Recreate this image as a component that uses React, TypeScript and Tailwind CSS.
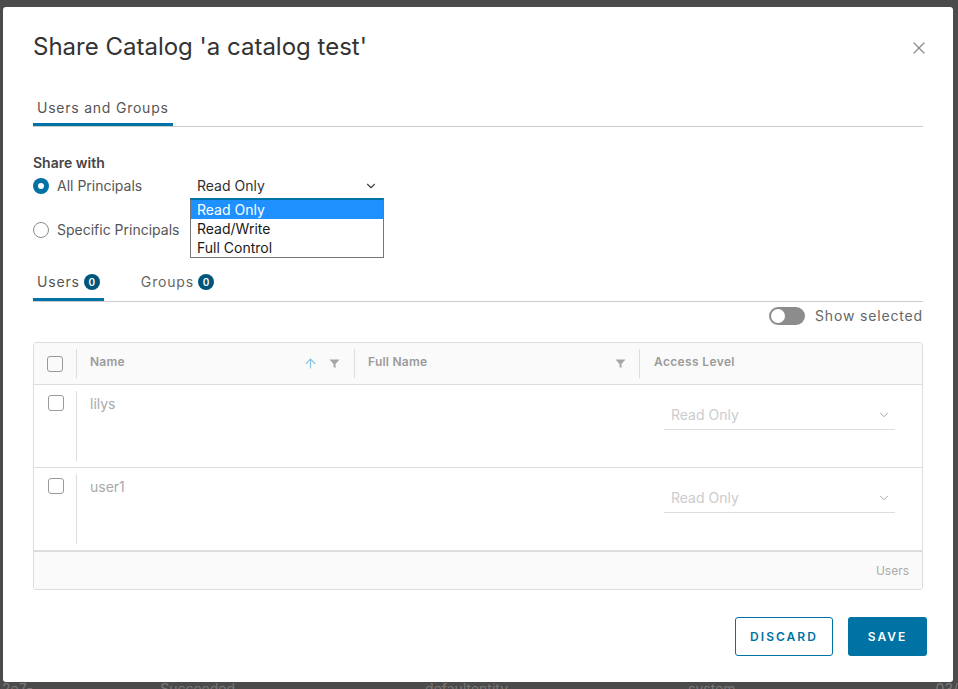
import { ChevronDown, X, ArrowUp } from 'lucide-react';

const font = { fontFamily: 'Inter, "Open Sans", sans-serif' };

function Radio({ checked, label }: { checked?: boolean; label: string }) {
  return (
    <div className="flex items-center gap-2">
      {checked ? (
        <span className="flex h-4 w-4 items-center justify-center rounded-full bg-[#0072a3]">
          <span className="h-[6px] w-[6px] rounded-full bg-white" />
        </span>
      ) : (
        <span className="h-4 w-4 rounded-full border border-[#8c8c8c] bg-white" />
      )}
      <span className="text-sm text-[#565656]">{label}</span>
    </div>
  );
}

function Checkbox() {
  return <span className="block h-4 w-4 rounded-[3px] border border-[#999]" />;
}

function Filter() {
  return (
    <svg width="11" height="11" viewBox="0 0 11 11">
      <path d="M0.5 1.5h10L6.5 6v4L4.5 9V6z" fill="#a6a6a6" />
    </svg>
  );
}

function Badge({ n }: { n: number }) {
  return (
    <span className="ml-1 flex h-4 w-4 items-center justify-center rounded-full bg-[#00567a] text-[10px] font-semibold tracking-normal text-white">
      {n}
    </span>
  );
}

function Row({ name }: { name: string }) {
  return (
    <div className="flex h-[83px] border-b border-[#dddddd]">
      <div className="flex w-[42px] shrink-0 justify-center pt-[10px] pl-[2px]">
        <Checkbox />
      </div>
      <div className="my-[6px] w-px bg-[#dddddd]" />
      <div className="flex-1 pl-[13px] pt-[9px] text-sm text-[#aaaaaa]">{name}</div>
      <div className="w-[258px] pr-[27px] pt-[20px]">
        <div className="flex h-[25px] items-start justify-between border-b border-[#dddddd] pl-[7px] pr-[4px]">
          <span className="text-sm text-[#cccccc]">Read Only</span>
          <ChevronDown className="mt-[3px] h-[14px] w-[14px] text-[#999]" strokeWidth={1.5} />
        </div>
      </div>
    </div>
  );
}

export default function App() {
  return (
    <div className="flex h-[689px] w-[958px] flex-col overflow-hidden bg-[#4b4b4b]" style={font}>
      <div className="ml-[3px] mt-[7px] flex h-[675px] w-[950px] shrink-0 flex-col rounded-[3px] bg-white px-[30px]">
        {/* Header */}
        <div className="flex items-start justify-between pt-[24px]">
          <h1 className="text-[24px] leading-[32px] font-normal text-[#333333]">Share Catalog 'a catalog test'</h1>
          <X className="mr-[-6px] mt-[7px] h-[20px] w-[20px] text-[#8c8c8c]" strokeWidth={1.5} />
        </div>

        {/* Top tabs */}
        <div className="mt-[35px] flex border-b border-[#cccccc]">
          <div className="border-b-[3px] border-[#0072a3] px-1 pb-[5px] text-sm tracking-[0.055em] text-[#565656]">
            Users and Groups
          </div>
        </div>

        {/* Share with */}
        <div className="mt-[26px] text-sm font-semibold text-[#454545]">Share with</div>
        <div className="relative mt-[3px] flex items-center">
          <div className="w-[157px]">
            <Radio checked label="All Principals" />
          </div>
          <div className="flex w-[194px] items-center justify-between pl-[7px] pr-[6px]">
            <span className="text-sm text-[#313131]">Read Only</span>
            <ChevronDown className="h-[14px] w-[14px] text-[#454545]" strokeWidth={2} />
          </div>
          {/* open native list */}
          <div className="absolute left-[157px] top-[22px] z-10 w-[194px] border border-[#767676] border-t-2 border-t-[#0072a3] bg-white text-sm leading-[19px] text-[#1a1a1a]">
            <div className="bg-[#1e90ff] pl-[6px] text-white">Read Only</div>
            <div className="pl-[6px]">Read/Write</div>
            <div className="pl-[6px]">Full Control</div>
          </div>
        </div>
        <div className="mt-[24px]">
          <Radio label="Specific Principals" />
        </div>

        {/* Users / Groups tabs */}
        <div className="mt-[32px] flex items-end border-b border-[#cccccc]">
          <div className="flex items-center border-b-[3px] border-[#0072a3] px-1 pb-[6px] text-sm tracking-[0.06em] text-[#565656]">
            Users <Badge n={0} />
          </div>
          <div className="ml-[33px] flex items-center border-b-[3px] border-transparent px-1 pb-[6px] text-sm tracking-[0.06em] text-[#666]">
            Groups <Badge n={0} />
          </div>
        </div>

        <div className="mt-[4px] flex items-center justify-end gap-[10px]">
          <span className="flex h-[18px] w-[36px] items-center rounded-full bg-[#8c8c8c] pl-[2px]">
            <span className="h-[14px] w-[14px] rounded-full bg-white" />
          </span>
          <span className="text-sm tracking-[0.06em] text-[#666]">Show selected</span>
        </div>

        {/* Table */}
        <div className="mt-[16px] overflow-hidden rounded-[3px] border border-[#dddddd]">
          <div className="flex h-[42px] border-b border-[#dddddd] bg-[#fafafa] text-xs font-semibold text-[#9a9a9a]">
            <div className="flex w-[42px] shrink-0 items-center justify-center">
              <Checkbox />
            </div>
            <div className="my-[6px] w-px bg-[#dddddd]" />
            <div className="flex w-[277px] items-start justify-between pl-[13px] pr-[14px] pt-[11px]">
              <span className="tracking-[0.02em]">Name</span>
              <span className="flex items-center gap-[11px] pt-[2px]">
                <ArrowUp className="h-[15px] w-[15px] text-[#89c3dd]" strokeWidth={1.8} />
                <Filter />
              </span>
            </div>
            <div className="my-[6px] w-px bg-[#dddddd]" />
            <div className="flex w-[284px] items-start justify-between pl-[13px] pr-[13px] pt-[11px]">
              <span className="tracking-[0.02em]">Full Name</span>
              <span className="pt-[4px]">
                <Filter />
              </span>
            </div>
            <div className="my-[6px] w-px bg-[#dddddd]" />
            <div className="pl-[14px] pt-[11px] tracking-[0.03em]">Access Level</div>
          </div>
          <Row name="lilys" />
          <Row name="user1" />
          <div className="flex h-[38px] items-center justify-end border-t border-[#dddddd] bg-[#fafafa] pr-[13px] text-xs text-[#aaaaaa]">
            Users
          </div>
        </div>

        {/* Footer buttons */}
        <div className="mt-[27px] flex justify-end gap-[15px]">
          <button className="h-[39px] w-[98px] rounded-[3px] border border-[#0072a3] text-xs font-semibold tracking-[0.17em] text-[#0072a3]">
            DISCARD
          </button>
          <button className="mr-[-4px] h-[39px] w-[79px] rounded-[3px] bg-[#0072a3] text-xs font-semibold tracking-[0.17em] text-white">
            SAVE
          </button>
        </div>
      </div>
      <div className="flex gap-[100px] pl-[2px] text-sm leading-[14px] text-[#777]">
        <span>2e7-563829-190</span>
        <span>Succeeded</span>
        <span className="ml-[90px]">defaultentity</span>
        <span className="ml-[80px]">system</span>
        <span className="ml-[100px]">03/15/2024, 02:50</span>
      </div>
    </div>
  );
}
